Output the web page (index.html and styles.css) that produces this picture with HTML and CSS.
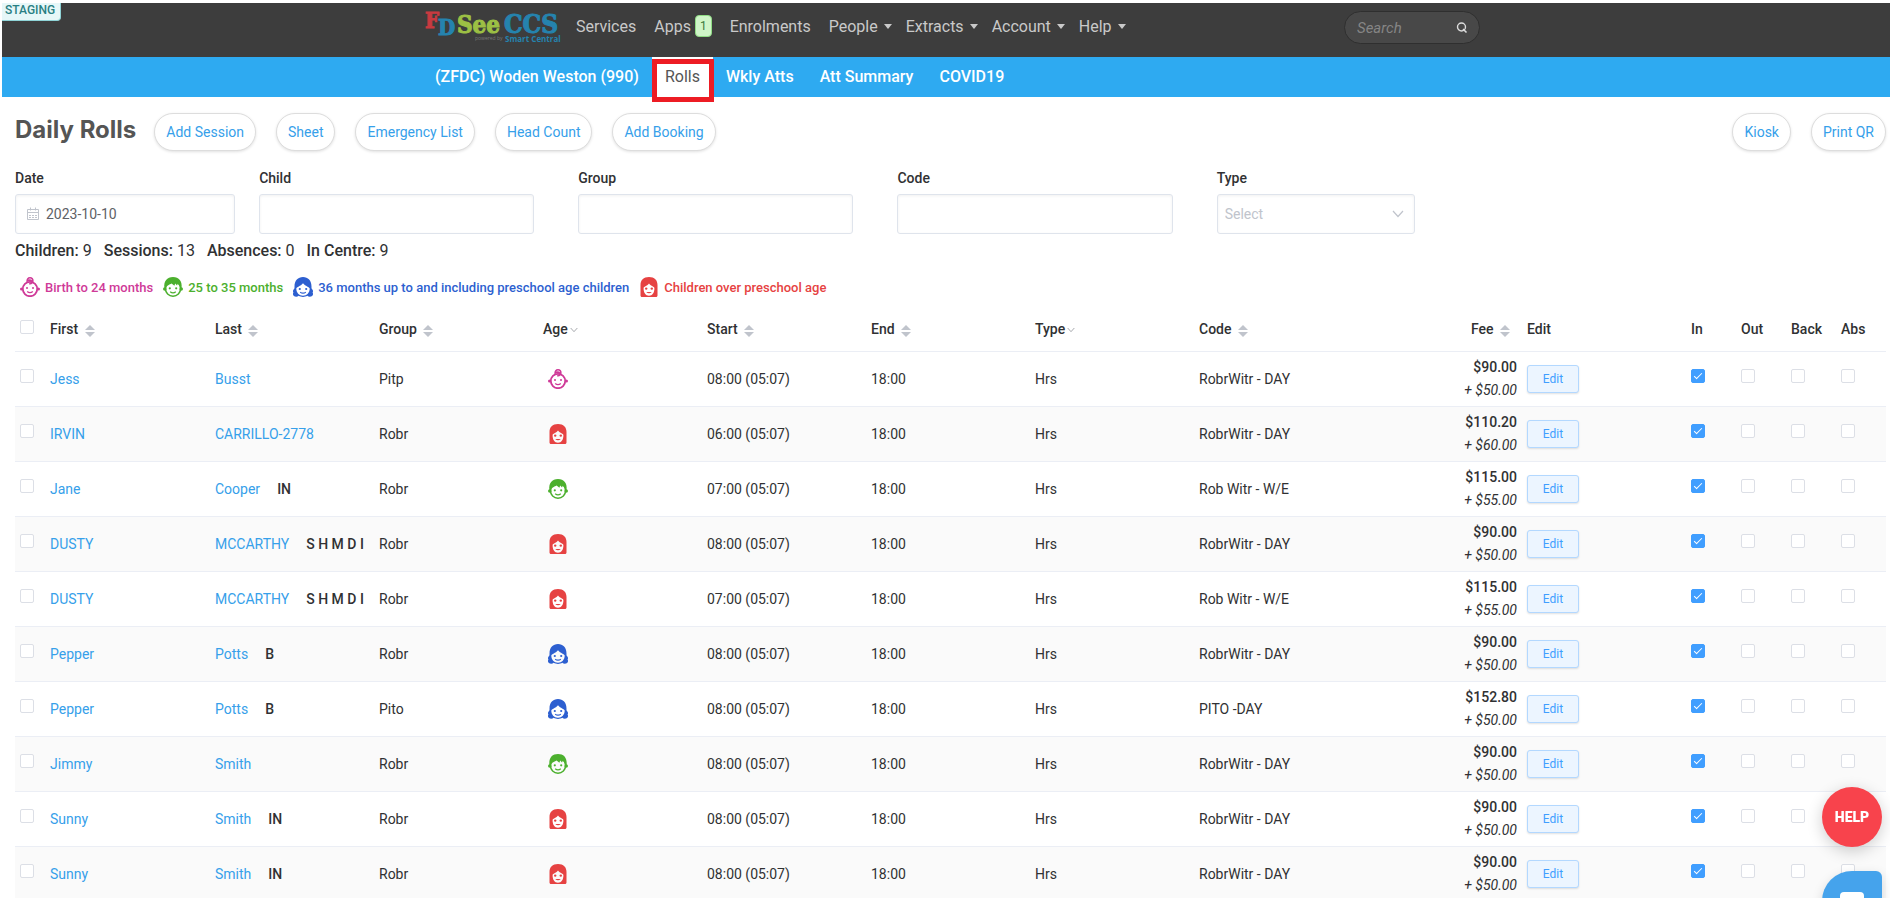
FILE: index.html
```html
<!DOCTYPE html>
<html lang="en">
<head>
    <meta charset="UTF-8">
    <meta name="viewport" content="width=device-width, initial-scale=1.0">
    <title>Daily Rolls</title>
    <link rel="stylesheet" href="styles.css">
</head>
<body>
    <svg class="sprite" aria-hidden="true">
        <symbol id="age-baby" viewBox="0 0 20 20">
            <circle cx="10" cy="12" r="7.2" fill="none" stroke="currentColor" stroke-width="1.8"/>
            <circle cx="1.6" cy="12" r="1.6"/>
            <circle cx="18.4" cy="12" r="1.6"/>
            <path d="M7.200 4.800C6.800 2.400 8 .8 10 .8c2 0 3.200 1.400 2.800 3.400C12.400 6 10.800 6.900 9.200 6.600M7.600 3.800c1.600-1 3.200-.6 4.400.6" fill="none" stroke="currentColor" stroke-width="1.6"/>
            <circle cx="7" cy="11" r="1"/>
            <circle cx="13" cy="11" r="1"/>
            <path d="M7.200 14.400q2.800 2.400 5.600 0" fill="none" stroke="currentColor" stroke-width="1.3"/>
        </symbol>
        <symbol id="age-toddler" viewBox="0 0 20 20">
            <circle cx="10" cy="11.600" r="7.600" fill="none" stroke="currentColor" stroke-width="1.500"/>
            <circle cx="1.800" cy="12" r="1.800"/>
            <circle cx="18.200" cy="12" r="1.800"/>
            <path d="M1.400 11C.6 4 4 0 10 0s9.400 4 8.600 11l-1.600.2c0-2-.8-3.600-2.200-4.500l-.8 1.700-1.800-1.800-.8 2.200-2.800-2.400C6.400 7.800 3.800 7.800 3 11.200z"/>
            <circle cx="6.800" cy="11.300" r="1.100"/>
            <circle cx="13.200" cy="11.300" r="1.100"/>
            <path d="M7.200 14.800q2.800 2.200 5.600 0" fill="none" stroke="currentColor" stroke-width="1.300"/>
        </symbol>
        <symbol id="age-preschool" viewBox="0 0 20 20">
            <path d="M1.500 9.500C1.500 3.500 5 0 10 0s8.500 3.500 8.500 9.500c0 1.500-.1 2 .9 3 .8 1 .8 2 .2 3 .8 1.300.5 2.700-.5 3.500-1.500 1.200-3.600 1-4.800-.2-2.300 1.500-6.300 1.500-8.600 0C4.500 20 2.400 20.200.9 19c-1-.8-1.300-2.200-.5-3.500-.6-1-.6-2 .2-3 1-1 .9-1.500.9-3zM3.300 11.500c0 4.200 2.800 7.200 6.700 7.200s6.700-3 6.700-7.200c-.2-1.800-4.300-2.200-6.700-5.300-2.400 3.100-6.500 3.500-6.700 5.300z" fill-rule="evenodd"/>
            <circle cx="6.800" cy="12" r="1.100"/>
            <circle cx="13.200" cy="12" r="1.100"/>
            <path d="M7.200 15.200q2.800 2 5.600 0" fill="none" stroke="currentColor" stroke-width="1.300"/>
        </symbol>
        <symbol id="age-school" viewBox="0 0 20 20">
            <path d="M1.500 8C1.500 3 4.500 0 10 0s8.500 3 8.500 8v10.500c0 .9-.6 1.500-1.500 1.500H3c-.9 0-1.500-.6-1.500-1.500zM4.600 11c-.2 4.500 2 7.700 5.400 7.700s5.600-3.200 5.400-7.700c-.1-1.200-3.200-1.500-5.400-4.400C7.800 9.500 4.700 9.800 4.600 11z" fill-rule="evenodd"/>
            <circle cx="7.200" cy="11.600" r="1.200"/>
            <circle cx="12.800" cy="11.600" r="1.200"/>
            <path d="M7.200 15q2.800 2.600 5.600 0z"/>
        </symbol>
        <symbol id="chevron" viewBox="0 0 12 12">
            <path d="M1 3l5 5.500L11 3" fill="none" stroke="currentColor" stroke-width="1.200"/>
        </symbol>
    </svg>

    <header class="topbar">
        <span class="env-tag">STAGING</span>
        <a href="#" class="logo" aria-label="FDSeeCCS">
            <svg width="136" height="38" viewBox="0 0 136 38">
                <text x="0" y="21" class="logo-red" font-size="22">F</text>
                <text x="13" y="28" class="logo-blue" font-size="22">D</text>
                <text x="32" y="26" class="logo-green" font-size="24">See</text>
                <text x="79" y="26" class="logo-blue" font-size="26">CCS</text>
                <text x="50" y="33" class="logo-small" font-size="5">powered by</text>
                <text x="80" y="35" class="logo-sub" font-size="8">Smart Central</text>
            </svg>
        </a>
        <nav class="main-nav">
            <a href="#">Services</a>
            <a href="#">Apps <span class="badge">1</span></a>
            <a href="#">Enrolments</a>
            <a href="#" class="has-menu">People</a>
            <a href="#" class="has-menu">Extracts</a>
            <a href="#" class="has-menu">Account</a>
            <a href="#" class="has-menu">Help</a>
        </nav>
        <form class="search">
            <input type="text" placeholder="Search" aria-label="Search">
            <button type="button" aria-label="Go">
                <svg width="12" height="12" viewBox="0 0 12 12"><circle cx="5.500" cy="5" r="4" fill="none" stroke="currentColor" stroke-width="1.400"/><path d="M7 7l3.500 3.500" stroke="currentColor" stroke-width="1.600"/></svg>
            </button>
        </form>
    </header>

    <nav class="sub-nav">
        <a href="#">(ZFDC) Woden Weston (990)</a>
        <a href="#" class="active">Rolls</a>
        <a href="#">Wkly Atts</a>
        <a href="#">Att Summary</a>
        <a href="#">COVID19</a>
    </nav>

    <main class="page">
        <div class="page-head">
            <h1>Daily Rolls</h1>
            <button class="pill">Add Session</button>
            <button class="pill">Sheet</button>
            <button class="pill">Emergency List</button>
            <button class="pill">Head Count</button>
            <button class="pill">Add Booking</button>
            <div class="head-right">
                <button class="pill">Kiosk</button>
                <button class="pill">Print QR</button>
            </div>
        </div>

        <form class="filters">
            <div class="field">
                <label for="date">Date</label>
                <div class="control date">
                    <svg width="14" height="14" viewBox="0 0 14 14" fill="none" stroke="currentColor"><path d="M1.500 2.500h11v10h-11zM1.500 5.500h11M4.500.5v3M9.500.5v3"/><path d="M3 8.500h8M3 10.500h8" stroke-dasharray="2 1"/></svg>
                    <input type="text" id="date" value="2023-10-10">
                </div>
            </div>
            <div class="field">
                <label for="child">Child</label>
                <div class="control"><input type="text" id="child"></div>
            </div>
            <div class="field">
                <label for="group">Group</label>
                <div class="control"><input type="text" id="group"></div>
            </div>
            <div class="field">
                <label for="code">Code</label>
                <div class="control"><input type="text" id="code"></div>
            </div>
            <div class="field">
                <label for="type">Type</label>
                <div class="control type">
                    <select id="type">
                        <option>Select</option>
                    </select>
                    <svg width="12" height="12"><use href="#chevron"/></svg>
                </div>
            </div>
        </form>

        <div class="totals">
            <span><b>Children:</b> 9</span>
            <span><b>Sessions:</b> 13</span>
            <span><b>Absences:</b> 0</span>
            <span><b>In Centre:</b> 9</span>
        </div>

        <div class="legend">
            <span class="baby"><svg class="age"><use href="#age-baby"/></svg>Birth to 24 months</span>
            <span class="toddler"><svg class="age"><use href="#age-toddler"/></svg>25 to 35 months</span>
            <span class="preschool"><svg class="age"><use href="#age-preschool"/></svg>36 months up to and including preschool age children</span>
            <span class="school"><svg class="age"><use href="#age-school"/></svg>Children over preschool age</span>
        </div>

        <table class="rolls">
            <colgroup>
                <col class="col-check">
                <col class="col-first">
                <col span="9">
                <col class="col-tick" span="3">
                <col class="col-last">
            </colgroup>
            <thead>
                <tr>
                    <th class="check"><input type="checkbox" aria-label="Select all"></th>
                    <th>First <span class="sort"></span></th>
                    <th>Last <span class="sort"></span></th>
                    <th>Group <span class="sort"></span></th>
                    <th>Age<svg class="filter"><use href="#chevron"/></svg></th>
                    <th>Start <span class="sort"></span></th>
                    <th>End <span class="sort"></span></th>
                    <th>Type<svg class="filter"><use href="#chevron"/></svg></th>
                    <th>Code <span class="sort"></span></th>
                    <th class="fee">Fee <span class="sort"></span></th>
                    <th>Edit</th>
                    <th>In</th>
                    <th>Out</th>
                    <th>Back</th>
                    <th>Abs</th>
                </tr>
            </thead>
            <tbody id="rows"></tbody>
        </table>
    </main>

    <button class="help">HELP</button>
    <button class="chat" aria-label="Chat"><span></span></button>

    <script>
        // first, last, flags, group, age, start, code, fee, extra
        const sessions = [
            ['Jess', 'Busst', '', 'Pitp', 'baby', '08:00', 'RobrWitr - DAY', '90.00', '50.00'],
            ['IRVIN', 'CARRILLO-2778', '', 'Robr', 'school', '06:00', 'RobrWitr - DAY', '110.20', '60.00'],
            ['Jane', 'Cooper', 'IN', 'Robr', 'toddler', '07:00', 'Rob Witr - W/E', '115.00', '55.00'],
            ['DUSTY', 'MCCARTHY', 'S H M D I', 'Robr', 'school', '08:00', 'RobrWitr - DAY', '90.00', '50.00'],
            ['DUSTY', 'MCCARTHY', 'S H M D I', 'Robr', 'school', '07:00', 'Rob Witr - W/E', '115.00', '55.00'],
            ['Pepper', 'Potts', 'B', 'Robr', 'preschool', '08:00', 'RobrWitr - DAY', '90.00', '50.00'],
            ['Pepper', 'Potts', 'B', 'Pito', 'preschool', '08:00', 'PITO -DAY', '152.80', '50.00'],
            ['Jimmy', 'Smith', '', 'Robr', 'toddler', '08:00', 'RobrWitr - DAY', '90.00', '50.00'],
            ['Sunny', 'Smith', 'IN', 'Robr', 'school', '08:00', 'RobrWitr - DAY', '90.00', '50.00'],
            ['Sunny', 'Smith', 'IN', 'Robr', 'school', '08:00', 'RobrWitr - DAY', '90.00', '50.00']
        ];

        document.getElementById('rows').innerHTML = sessions.map(s => `
            <tr>
                <td class="check"><input type="checkbox" aria-label="Select ${s[0]}"></td>
                <td><a href="#">${s[0]}</a></td>
                <td><a href="#">${s[1]}</a>${s[2] ? `<b class="flags">${s[2]}</b>` : ''}</td>
                <td>${s[3]}</td>
                <td class="${s[4]}"><svg class="age"><use href="#age-${s[4]}"/></svg></td>
                <td>${s[5]} (05:07)</td>
                <td>18:00</td>
                <td>Hrs</td>
                <td>${s[6]}</td>
                <td class="fee"><b>$${s[7]}</b><i>+ $${s[8]}</i></td>
                <td><button class="edit">Edit</button></td>
                <td class="tick"><input type="checkbox" aria-label="In" checked></td>
                <td class="tick"><input type="checkbox" aria-label="Out"></td>
                <td class="tick"><input type="checkbox" aria-label="Back"></td>
                <td class="tick"><input type="checkbox" aria-label="Abs"></td>
            </tr>`).join('');
    </script>
</body>
</html>
```
FILE: styles.css
```css
* {
    box-sizing: border-box;
}

body {
    margin: 0;
    padding: 3px 0 0 2px;
    height: 100vh;
    display: flex;
    flex-direction: column;
    overflow: hidden;
    background: #fff;
    color: #303133;
    font-family: Roboto, "Liberation Sans", sans-serif;
    font-size: 14px;
}

a {
    color: #36a0ea;
    text-decoration: none;
}

b {
    font-weight: 500;
}

button,
input,
select {
    font-family: inherit;
}

button {
    cursor: pointer;
}

.sprite {
    display: none;
}

/* top bar */
.topbar {
    position: relative;
    display: flex;
    flex: none;
    align-items: flex-start;
    height: 54px;
    padding-left: 22.4%;
    background: #3d3d3d;
}

.env-tag {
    position: absolute;
    left: 0;
    top: 0;
    height: 18px;
    padding: 0 5px 0 3px;
    background: #e6f7f8;
    border: solid #8fd3d6;
    border-width: 0 1px 1px 0;
    border-radius: 0 0 4px 0;
    color: #2a7f83;
    font-size: 12px;
    font-weight: 500;
    line-height: 14px;
}

.logo {
    margin-top: 4px;
    width: 136px;
}

.logo svg {
    overflow: visible;
}

.logo text {
    font-family: "DejaVu Serif Condensed", "DejaVu Serif", serif;
    font-weight: bold;
}

.logo .logo-red {
    fill: #c83a40;
    stroke: #c83a40;
}

.logo .logo-blue {
    fill: #2583ae;
    stroke: #2583ae;
}

.logo .logo-green {
    fill: #9cc044;
    stroke: #9cc044;
}

.logo .logo-small,
.logo .logo-sub {
    font-family: "Open Sans", sans-serif;
    font-weight: normal;
    fill: #777;
}

.logo .logo-sub {
    font-weight: bold;
    fill: #2583ae;
}

.main-nav {
    display: flex;
    align-items: center;
    gap: 18px;
    height: 46px;
    margin-left: 15px;
}

.main-nav a {
    display: flex;
    align-items: center;
    color: #c9c9c9;
    font-size: 16px;
}

.main-nav .has-menu::after {
    content: "";
    margin: 0 -4px 0 6px;
    border: 4px solid transparent;
    border-top: 5px solid #c9c9c9;
    border-bottom: 0;
}

.badge {
    height: 22px;
    margin-left: 4px;
    padding: 0 4px;
    background: #cff5c8;
    border: 1px solid #8fdc84;
    border-radius: 4px;
    color: #3c7a3c;
    font-size: 12px;
    line-height: 20px;
}

.search {
    display: flex;
    align-items: center;
    width: 136px;
    height: 33px;
    margin: 8px 410px 0 auto;
    padding: 0 11px 0 12px;
    background: #484848;
    border: 1px solid #2f2f2f;
    border-radius: 17px;
}

.search input {
    flex: 1;
    min-width: 0;
    padding: 0;
    border: 0;
    outline: 0;
    background: none;
    color: #ccc;
    font-size: 15px;
    font-style: italic;
}

.search input::placeholder {
    color: #858585;
}

.search button {
    display: flex;
    padding: 0;
    border: 0;
    background: none;
    color: #ddd;
}

/* service bar */
.sub-nav {
    display: flex;
    flex: none;
    height: 40px;
    padding-left: 22.25%;
    background: #2eaaf1;
}

.sub-nav a {
    position: relative;
    padding: 0 13px;
    color: #fff;
    font-size: 16px;
    font-weight: 500;
    line-height: 40px;
}

.sub-nav .active {
    background: #fff;
    color: #555;
    font-weight: 400;
}

.sub-nav .active::after {
    content: "";
    position: absolute;
    inset: 2px -1px -5px 0;
    border: 5px solid #ed1c24;
}

/* page */
.page {
    flex: 1;
    min-height: 0;
    overflow: auto;
    scrollbar-width: none;
    padding: 16px 4px 0 13px;
}

.page-head {
    display: flex;
    align-items: center;
    gap: 20px;
}

.page-head h1 {
    margin: 0 -2px 0 0;
    padding-bottom: 4px;
    color: #555;
    font-family: Inter, sans-serif;
    font-size: 24px;
    font-weight: 700;
    line-height: 32px;
}

.pill {
    height: 38px;
    padding: 0 11px;
    background: #fff;
    border: 1px solid #ddd;
    border-radius: 19px;
    box-shadow: 0 1px 3px rgba(0, 0, 0, 0.12);
    color: #36a0ea;
    font-size: 14px;
}

.head-right {
    display: flex;
    gap: 20px;
    margin-left: auto;
}

.filters {
    display: grid;
    grid-template-columns: 244fr 319fr 319fr 319fr 669fr;
    margin-top: 16px;
}

.field label {
    display: block;
    height: 27px;
    font-weight: 500;
    line-height: 22px;
}

.control {
    position: relative;
    display: flex;
    align-items: center;
    height: 40px;
    margin-right: 44px;
    padding: 0 10px;
    border: 1px solid #dfe4ec;
    border-radius: 3px;
    box-shadow: inset 0 1px 3px rgba(0, 0, 0, 0.06);
}

.control.date {
    margin-right: 24px;
    gap: 6px;
    color: #c0c4cc;
}

.control.type {
    width: 198px;
    padding-left: 7px;
    color: #c0c4cc;
}

.control input,
.control select {
    flex: 1;
    min-width: 0;
    padding: 0;
    border: 0;
    outline: 0;
    background: none;
    color: #606266;
    font-size: 14px;
}

.control select {
    appearance: none;
    color: #c0c4cc;
}

.totals {
    display: flex;
    gap: 12px;
    margin-top: 6px;
    font-size: 16px;
    line-height: 22px;
}

.legend {
    display: flex;
    gap: 10px;
    margin-top: 15px;
    padding-left: 5px;
    font-size: 13px;
    font-weight: 500;
}

.legend span {
    display: flex;
    align-items: center;
    gap: 5px;
}

.age {
    display: block;
    width: 20px;
    height: 20px;
    fill: currentColor;
}

.baby { color: #cf3a98; }
.toddler { color: #4cb02e; }
.preschool { color: #2d5fd0; }
.school { color: #e64242; }

/* table */
.rolls {
    width: 100%;
    margin-top: 9px;
    table-layout: fixed;
    border-collapse: collapse;
}

.col-check { width: 25px; }
.col-first { width: 165px; }
.col-tick { width: 50px; }
.col-last { width: 55px; }

.rolls th,
.rolls td {
    padding: 0 0 0 10px;
    border-bottom: 1px solid #ebeef5;
    text-align: left;
    white-space: nowrap;
}

.rolls th {
    height: 45px;
    padding-top: 2px;
    font-weight: 500;
}

.rolls td {
    height: 55px;
}

.rolls tbody tr:nth-child(even) {
    background: #fafafa;
}

.rolls .check {
    padding-left: 5px;
}

.rolls .check,
.rolls .tick {
    padding-bottom: 5px;
}

.rolls .fee {
    padding: 0;
    text-align: right;
}

.rolls th.fee {
    padding: 2px 7px 0 0;
}

.fee b,
.fee i {
    display: block;
    line-height: 23px;
}

.rolls .age {
    margin-left: 5px;
}

.flags {
    margin-left: 17px;
}

.sort {
    display: inline-flex;
    flex-direction: column;
    gap: 2px;
    margin-left: 3px;
    vertical-align: middle;
}

.sort::before,
.sort::after {
    content: "";
    border: 5px solid transparent;
}

.sort::before {
    border-top: 0;
    border-bottom-color: #c0c4cc;
}

.sort::after {
    border-bottom: 0;
    border-top-color: #c0c4cc;
}

.filter {
    width: 8px;
    height: 8px;
    margin-left: 2px;
    color: #909399;
}

#chevron {
    overflow: visible;
}

.rolls input {
    display: block;
    position: relative;
    appearance: none;
    width: 14px;
    height: 14px;
    margin: 0;
    background: #fff;
    border: 1px solid #dcdfe6;
    border-radius: 2px;
}

.rolls input:checked {
    background: #409eff;
    border-color: #409eff;
}

.rolls input:checked::after {
    content: "";
    position: absolute;
    left: 4px;
    top: 1px;
    width: 3px;
    height: 7px;
    box-sizing: content-box;
    border: solid #fff;
    border-width: 0 1px 1px 0;
    transform: rotate(45deg);
}

.edit {
    display: block;
    width: 52px;
    height: 28px;
    padding: 0;
    background: #ecf5ff;
    border: 1px solid #b3d8ff;
    border-radius: 3px;
    box-shadow: 0 1px 2px rgba(0, 0, 0, 0.12);
    color: #409eff;
    font-size: 12px;
}

/* floating buttons */
.help,
.chat {
    position: fixed;
    right: 8px;
    width: 60px;
    height: 60px;
    padding: 0;
    border: 0;
}

.help {
    bottom: 51px;
    border-radius: 50%;
    background: #f8434c;
    box-shadow: 0 4px 16px rgba(0, 0, 0, 0.2);
    color: #fff;
    font-size: 14px;
    font-weight: 900;
}

.chat {
    bottom: -33px;
    border-radius: 30px 6px 30px 30px;
    background: #45a3ec;
    box-shadow: 0 4px 12px rgba(0, 0, 0, 0.15);
}

.chat span {
    display: block;
    width: 24px;
    height: 18px;
    margin: 0 auto;
    border-radius: 4px;
    background: #fff;
}
```
